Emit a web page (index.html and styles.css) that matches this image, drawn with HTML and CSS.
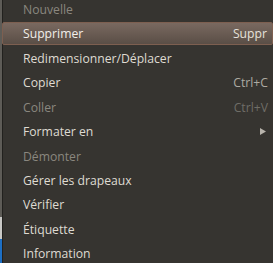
FILE: index.html
```html
<!DOCTYPE html>
<html lang="fr">
<head>
  <meta charset="UTF-8">
  <title>Menu</title>
  <link rel="stylesheet" href="styles.css">
</head>
<body>
  <div class="screen">
    <div class="behind">
      <div class="behind-top"></div>
      <div class="behind-light"></div>
      <div class="behind-blue"></div>
    </div>
    <ul class="menu">
      <li class="item disabled">Nouvelle</li>
      <li class="item active"><span>Supprimer</span><span class="key">Suppr</span></li>
      <li class="item">Redimensionner/Déplacer</li>
      <li class="item"><span>Copier</span><span class="key">Ctrl+C</span></li>
      <li class="item disabled"><span>Coller</span><span class="key">Ctrl+V</span></li>
      <li class="item">
        <span>Formater en</span>
        <svg class="arrow" width="6" height="7" viewBox="0 0 6 7"><polygon points="0,0 6,3.5 0,7" fill="#b8b4ac"/></svg>
      </li>
      <li class="item disabled">Démonter</li>
      <li class="item">Gérer les drapeaux</li>
      <li class="item">Vérifier</li>
      <li class="item">Étiquette</li>
      <li class="item">Information</li>
    </ul>
  </div>
</body>
</html>
```

FILE: styles.css
```css
body {
  margin: 0;
  background-color: #363430;
  font-family: "Open Sans", sans-serif;
  font-size: 12.2px;
  overflow: hidden;
}
.screen {
  display: flex;
  height: 263px;
}
.behind {
  width: 2px;
  display: flex;
  flex-direction: column;
  border-right: 1px solid #22211e;
}
.behind-top {
  flex: 1;
  background: #5e5c57;
}
.behind-light {
  height: 22px;
  background: #c9c9c6;
}
.behind-blue {
  height: 24px;
  background: #1d6fc4;
}
.menu {
  flex: 1;
  list-style: none;
  margin: -2.4px 0 0 0;
  padding: 0;
}
.item {
  box-sizing: border-box;
  display: flex;
  justify-content: space-between;
  align-items: center;
  height: 24.4px;
  padding: 0 5px 0 20px;
  color: #dfdbd2;
}
.disabled {
  color: #8a877f;
}
.key {
  color: #aeaaa2;
}
.disabled .key {
  color: #6f6d67;
}
.active {
  color: #f2efea;
  background: linear-gradient(#796960, #5a4e46);
  border: 1px solid #7d5f50;
  border-radius: 2px;
  height: 23.4px;
  margin-bottom: 1px;
  margin-left: -1px;
  padding-left: 20px;
}
.active .key {
  color: #e6e2dc;
}
.arrow {
  margin-right: 2px;
}
```
